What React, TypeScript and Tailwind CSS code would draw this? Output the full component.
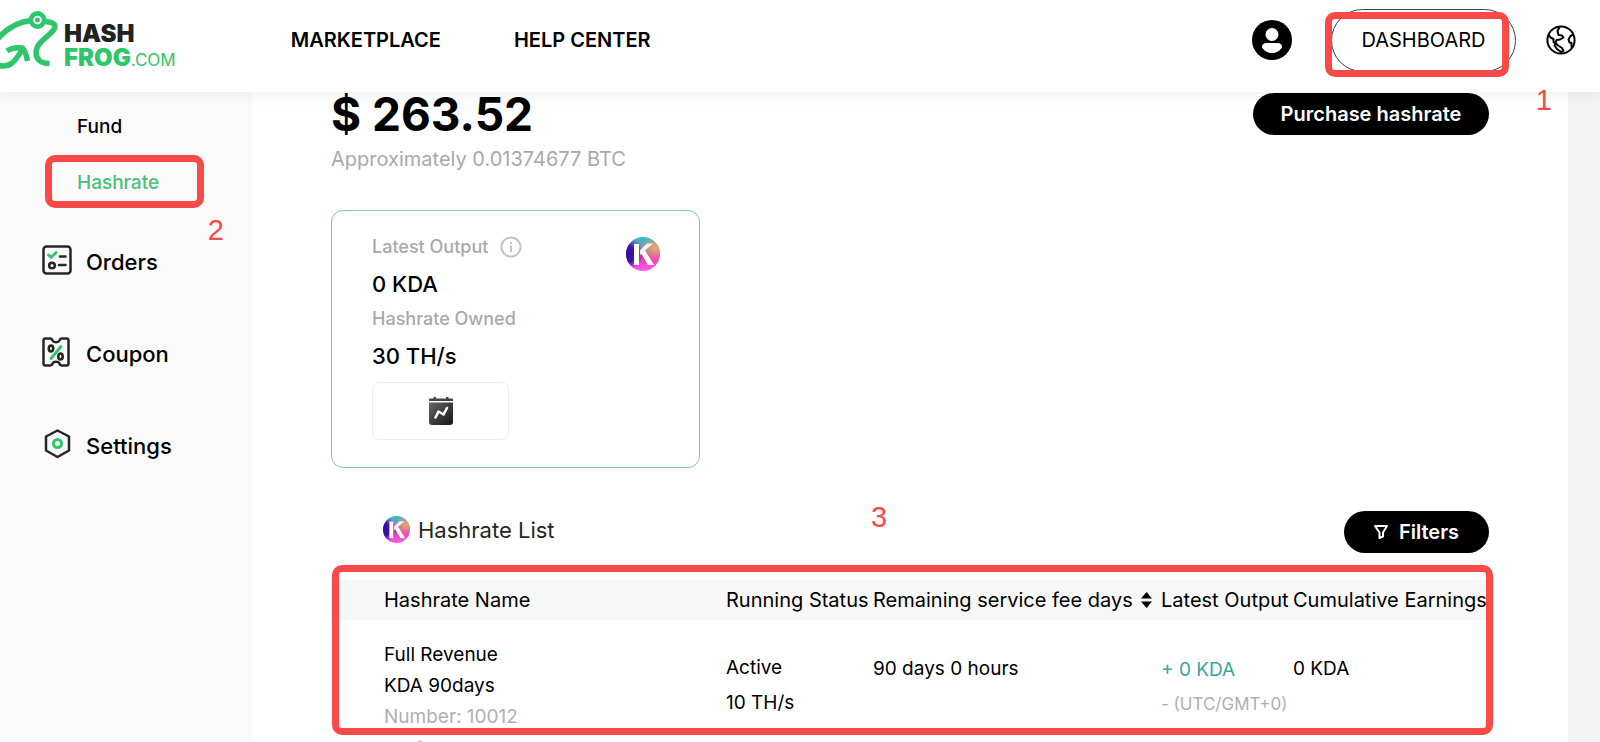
import React from "react";

function FrogLogo() {
  return (
    <svg className="h-[60px] w-[60px] shrink-0" viewBox="0 10 60 60" fill="none" stroke="#2fc66b" strokeWidth="5.500" aria-hidden="true">
      <path d="M-3 39.500C6 29 16 22 31 20.500" />
      <path d="M44 21.500C49 21.500 55 23 55 26.500C55 31 47 36 41.500 41.500C37 46 36 49 36 52.500C36 59.500 41 63.500 49.500 63.500" />
      <circle cx="37.500" cy="20" r="6" strokeWidth="6" />
      <circle cx="37.500" cy="20" r="3.400" fill="#2fc66b" stroke="#fff" strokeWidth="1.800" />
      <path d="M-3 65C10 68.500 15 62 22.500 49" />
      <path d="M7 51C11 48 16 47 22.500 48C25 51 26.500 55 27.500 61" />
    </svg>
  );
}

function UserIcon() {
  return (
    <svg className="size-10" viewBox="0 0 40 40" aria-hidden="true">
      <circle cx="20" cy="20" r="20" fill="#000" />
      <circle cx="20" cy="14.500" r="6.500" fill="#fff" />
      <path d="M10 27.500C10 24 12 23 15 23H25C28 23 30 24 30 27.500C28 31 24 33 20 33S12 31 10 27.500Z" fill="#fff" />
    </svg>
  );
}

function GlobeIcon() {
  return (
    <svg className="size-[30px]" viewBox="0 0 30 30" fill="none" stroke="#000" strokeWidth="2" strokeLinejoin="round" aria-hidden="true">
      <circle cx="15" cy="15" r="13.600" />
      <path d="M2.500 9.500L4.500 12.500L7.500 14V17L9.500 18L10.500 15L14 14.500L17.500 12.500L16 10.500L12.500 10L11.500 6L13.500 2" />
      <path d="M9.500 18L8.500 20.500L11 24L15 27L17.500 26L16 23L12 20.500Z" />
      <path d="M27.500 9.500L24.500 11L22.500 14.500L23.500 17.500L25.500 18V22.500" />
    </svg>
  );
}

function OrdersIcon() {
  return (
    <svg className="size-[30px]" viewBox="0 0 30 30" fill="none" stroke="#262626" strokeWidth="2.500" strokeLinecap="round" strokeLinejoin="round" aria-hidden="true">
      <rect x="1.500" y="1.500" width="27" height="27" rx="3" />
      <path d="M18 11.500H23.500M17 20H23.500" />
      <circle cx="10" cy="20.500" r="2.800" strokeWidth="2.600" />
      <path d="M6.500 10L9 12.500L14 7.500" stroke="#2fc66b" strokeWidth="2.800" />
    </svg>
  );
}

function CouponIcon() {
  return (
    <svg className="h-[30px] w-[28px]" viewBox="0 0 28 30" fill="none" stroke="#262626" strokeWidth="2.500" strokeLinejoin="round" aria-hidden="true">
      <path d="M3.500 1.500H8.500C9.500 1.500 10 2 10.500 3.500C11.500 5.800 16.500 5.800 17.500 3.500C18 2 18.500 1.500 19.500 1.500H24.500Q26.500 1.500 26.500 3.500V26.500Q26.500 28.500 24.500 28.500H19.500C18.500 28.500 18 28 17.500 26.500C16.500 24.200 11.500 24.200 10.500 26.500C10 28 9.500 28.500 8.500 28.500H3.500Q1.500 28.500 1.500 26.500V3.500Q1.500 1.500 3.500 1.500Z" />
      <ellipse cx="9" cy="11.500" rx="2.200" ry="3" strokeWidth="2.600" />
      <ellipse cx="18.500" cy="19.500" rx="2.200" ry="3" strokeWidth="2.600" />
      <path d="M9 21.500L19 9.500" stroke="#2fc66b" strokeWidth="2.800" strokeLinecap="round" />
    </svg>
  );
}

function SettingsIcon() {
  return (
    <svg className="size-[30px]" viewBox="0 0 30 30" fill="none" stroke="#262626" strokeWidth="2.500" strokeLinejoin="round" aria-hidden="true">
      <path d="M15.500 1.500L27 7.500V21.500L15.500 28L4 21.500V7.500Z" />
      <circle cx="15.500" cy="14.500" r="4" stroke="#2fc66b" strokeWidth="3" />
    </svg>
  );
}

function KdaCoin({ id, className }: { id: string; className: string }) {
  return (
    <svg className={className} viewBox="0 0 34 34" role="img" aria-label="KDA">
      <defs>
        <linearGradient id={id + "a"} x1="0" y1="0" x2="0" y2="1">
          <stop offset="0" stopColor="#1fc4cf" />
          <stop offset=".32" stopColor="#8f8fa8" />
          <stop offset=".6" stopColor="#e83fae" />
          <stop offset="1" stopColor="#ff5cf0" />
        </linearGradient>
        <radialGradient id={id + "b"} cx=".02" cy=".5" r=".5">
          <stop offset="0" stopColor="#2a0f9c" />
          <stop offset=".5" stopColor="#4311a5" />
          <stop offset="1" stopColor="#7a1fc0" stopOpacity="0" />
        </radialGradient>
        <radialGradient id={id + "c"} cx=".85" cy=".32" r=".4">
          <stop offset="0" stopColor="#f4a16a" />
          <stop offset="1" stopColor="#f4a16a" stopOpacity="0" />
        </radialGradient>
      </defs>
      <circle cx="17" cy="17" r="17" fill={"url(#" + id + "a)"} />
      <circle cx="17" cy="17" r="17" fill={"url(#" + id + "c)"} />
      <circle cx="17" cy="17" r="17" fill={"url(#" + id + "b)"} />
      <path d="M8 7H13V28H8Z" fill="#fff" />
      <path d="M21 6.500H27L14 18V13Z" fill="#fff" fillOpacity=".85" />
      <path d="M15 16L19 13.500L28 28H22Z" fill="#fff" />
    </svg>
  );
}

function ChartIcon() {
  return (
    <svg className="h-[30px] w-[26px]" viewBox="0 0 26 30" aria-hidden="true">
      <defs>
        <linearGradient id="chart" x1="0" y1="0" x2="1" y2="1">
          <stop offset="0" stopColor="#666" />
          <stop offset="1" stopColor="#161616" />
        </linearGradient>
      </defs>
      <path d="M1 5V3.500Q1 2.500 2 2.500H5.500V1H8V2.500H18V1H20.500V2.500H24Q25 2.500 25 3.500V5Z" fill="#444" />
      <path d="M1 6.500H25V26Q25 29 22 29H4Q1 29 1 26Z" fill="url(#chart)" />
      <path d="M7.500 21.500L10.500 15.500L15.500 18.500L19 12" fill="none" stroke="#fff" strokeWidth="2.600" strokeLinecap="round" strokeLinejoin="round" />
    </svg>
  );
}

const sections = [
  { label: "Orders", icon: <OrdersIcon /> },
  { label: "Coupon", icon: <CouponIcon /> },
  { label: "Settings", icon: <SettingsIcon /> },
];

const frame = "pointer-events-none absolute rounded-[10px] border-[7px] border-[#fa4a48]";
const marker = "pointer-events-none absolute font-['Liberation_Sans',sans-serif] text-[29px] leading-8 text-[#fa4a48]";

export default function App() {
  return (
    <div className="flex h-screen flex-col overflow-hidden bg-white font-['Inter',sans-serif] text-xl text-black">
      <header className="relative z-10 flex h-[92px] shrink-0 items-center bg-white pb-3 pr-6 shadow-[0_0_16px_rgba(0,0,0,0.08)]">
        <a href="#home" className="flex items-center">
          <FrogLogo />
          <span className="flex flex-col pl-1 pt-3 text-[24px] font-black leading-6 text-[#222]">
            <span className="block h-6">HASH</span>
            <span className="flex h-6 items-baseline text-[#2fc66b]">
              FROG<span className="text-[17px] font-normal">.COM</span>
            </span>
          </span>
        </a>
        <nav className="ml-[115px] flex gap-[73px] font-semibold">
          <a href="#marketplace">MARKETPLACE</a>
          <a href="#help">HELP CENTER</a>
        </nav>
        <div className="ml-auto flex items-center">
          <button type="button" aria-label="Account">
            <UserIcon />
          </button>
          <div className="relative ml-[39px]">
            <button type="button" className="h-[63px] w-[185px] rounded-full border border-neutral-700">
              DASHBOARD
            </button>
            <span className={frame + " -left-[6px] right-[7px] top-[3px] h-[65px]"} />
            <span className={marker + " -right-9 top-[75px]"}>1</span>
          </div>
          <button type="button" aria-label="Language" className="ml-[30px]">
            <GlobeIcon />
          </button>
        </div>
      </header>

      <div className="flex min-h-0 flex-1">
        <aside className="w-[252px] shrink-0 bg-[#fafafa] pt-[21px]">
          <nav>
            <a href="#fund" className="block pl-[77px] text-[19px] font-medium leading-7">
              Fund
            </a>
            <div className="relative mt-7">
              <a href="#hashrate" className="block pl-[77px] text-[19px] font-medium leading-7 text-[#4abf78]">
                Hashrate
              </a>
              <span className={frame + " -top-[14px] left-[45px] right-[48px] h-[53px]"} />
              <span className={marker + " right-7 top-[45px]"}>2</span>
            </div>
            <ul className="mt-[49px] flex flex-col gap-[60px] pl-[42px] text-[22px] font-medium">
              {sections.map((s) => (
                <li key={s.label}>
                  <a href={"#" + s.label.toLowerCase()} className="flex h-8 items-center">
                    <span className="w-11 pb-1">{s.icon}</span>
                    {s.label}
                  </a>
                </li>
              ))}
            </ul>
          </nav>
        </aside>

        <main className="min-w-0 flex-1 px-[79px]">
          <div className="flex items-start justify-between">
            <div>
              <h1 className="text-[46px] font-bold leading-[44px]">$ 263.52</h1>
              <p className="mt-2 text-xl leading-[30px] text-[#a9a9a9]">Approximately 0.01374677 BTC</p>
            </div>
            <button type="button" className="mt-px h-[42px] w-[236px] rounded-full bg-black font-semibold text-white">
              Purchase hashrate
            </button>
          </div>

          <section className="mt-9 flex h-[258px] w-[369px] items-start justify-between rounded-xl border border-[#7ccaa0] pl-10 pr-[39px] pt-[22px]">
            <div>
              <div className="flex h-7 items-center gap-3 text-lg font-medium text-[#a9a9a9]">
                Latest Output
                <svg className="size-[22px]" viewBox="0 0 22 22" fill="none" stroke="#c4c4c4" strokeWidth="2" aria-hidden="true">
                  <circle cx="11" cy="11" r="9.600" />
                  <path d="M11 9.500V16M11 6V8" />
                </svg>
              </div>
              <p className="mt-2 text-[22px] font-medium leading-[30px]">0 KDA</p>
              <p className="mt-[6px] text-lg font-medium leading-7 text-[#a9a9a9]">Hashrate Owned</p>
              <p className="mt-2 text-[22px] font-medium leading-[30px]">30 TH/s</p>
              <button type="button" aria-label="Output chart" className="mt-[11px] flex h-[58px] w-[137px] items-center justify-center rounded-lg border border-[#ededed]">
                <ChartIcon />
              </button>
            </div>
            <KdaCoin id="card" className="mt-1 size-[34px]" />
          </section>

          <section className="relative mt-[43px]">
            <div className="flex h-[42px] items-center justify-between pl-[52px]">
              <h2 className="flex items-center gap-2 pb-1 text-[22px] text-[#262626]">
                <KdaCoin id="list" className="size-[27px]" />
                Hashrate List
              </h2>
              <button type="button" className="flex h-[42px] w-[145px] items-center justify-center gap-[11px] rounded-full bg-black font-semibold text-white">
                <svg className="size-[14px]" viewBox="0 0 14 14" fill="none" stroke="#fff" strokeWidth="2" strokeLinejoin="round" aria-hidden="true">
                  <path d="M1 1H13L9 7.500V11.500L5.500 13V7.500Z" />
                </svg>
                Filters
              </button>
            </div>
            <span className={marker + " left-[540px] -top-[10px]"}>3</span>

            <div className="relative mt-[27px]">
              <table className="w-full table-fixed text-left">
                <colgroup>
                  <col />
                  <col className="w-[147px]" />
                  <col className="w-[288px]" />
                  <col className="w-[132px]" />
                  <col className="w-[196px]" />
                </colgroup>
                <thead className="bg-[#f7f7f7]">
                  <tr className="h-10 whitespace-nowrap text-xl">
                    <th className="p-0 pl-[53px] font-normal">Hashrate Name</th>
                    <th className="p-0 font-normal">Running Status</th>
                    <th className="p-0 font-normal">
                      <button type="button" className="flex items-center gap-2">
                        Remaining service fee days
                        <svg className="h-4 w-[11px]" viewBox="0 0 11 16" aria-hidden="true">
                          <path d="M5.500 0L11 6.500H0ZM5.500 16L11 9.500H0Z" />
                        </svg>
                      </button>
                    </th>
                    <th className="p-0 font-normal">Latest Output</th>
                    <th className="p-0 font-normal">Cumulative Earnings</th>
                  </tr>
                </thead>
                <tbody>
                  <tr className="align-top text-[19px]">
                    <td className="p-0 pl-[53px] pt-[19px] leading-[31px]">
                      <p>Full Revenue</p>
                      <p>KDA 90days</p>
                      <p className="text-[#b0b0b0]">Number: 10012</p>
                      <svg className="ml-6 mt-2 size-6" viewBox="0 0 24 24" fill="none" stroke="#c9c9c9" strokeWidth="2" aria-hidden="true">
                        <path d="M4 8L12 1L20 8V22H4Z" />
                      </svg>
                    </td>
                    <td className="p-0 pt-[30px] leading-[35px]">
                      <p>Active</p>
                      <p>10 TH/s</p>
                    </td>
                    <td className="p-0 pt-[31px] leading-[35px]">90 days 0 hours</td>
                    <td className="whitespace-nowrap p-0 pt-[32px] leading-[35px]">
                      <p className="text-[#3aa896]">+ 0 KDA</p>
                      <p className="text-[17px] text-[#b0b0b0]">- (UTC/GMT+0)</p>
                    </td>
                    <td className="p-0 pt-[31px] leading-[35px]">0 KDA</td>
                  </tr>
                </tbody>
              </table>
              <span className={frame + " -right-1 -top-[15px] left-px h-[170px]"} />
            </div>
          </section>
        </main>
        <div className="w-8 shrink-0 bg-[#f3f3f3]" />
      </div>
    </div>
  );
}
